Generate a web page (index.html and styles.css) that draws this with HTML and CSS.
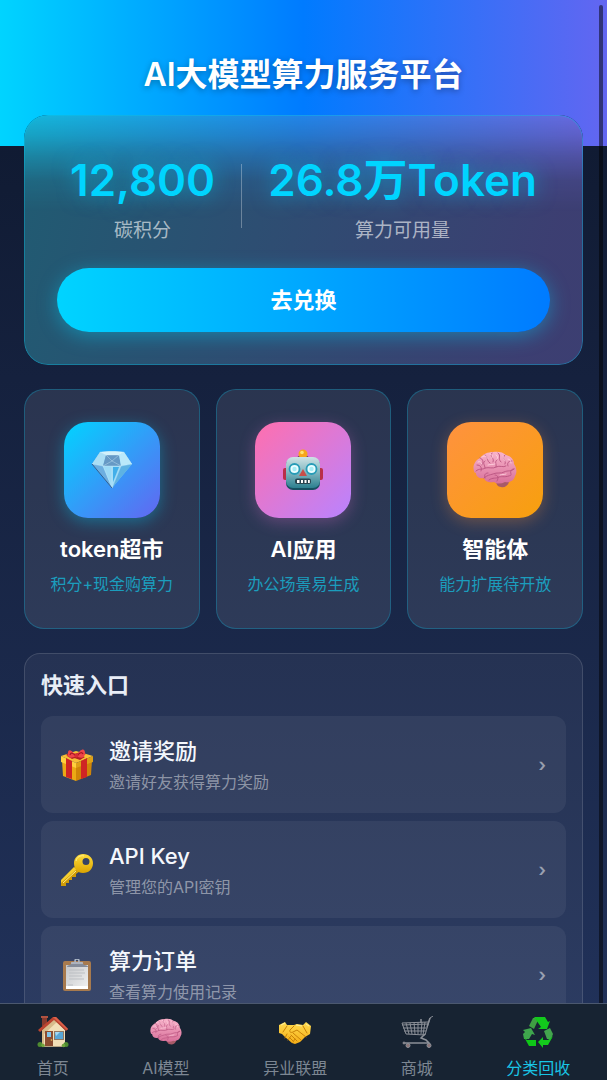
FILE: index.html
```html
<!DOCTYPE html>
<html lang="zh-CN">
<head>
<meta charset="utf-8">
<meta name="viewport" content="width=device-width, initial-scale=1">
<title>AI大模型算力服务平台</title>
<link rel="stylesheet" href="styles.css">
</head>
<body>
<svg class="defs" aria-hidden="true">
  <defs>
    <linearGradient id="brainFill" x1="0" y1="0" x2="0" y2="1"><stop offset="0" stop-color="#f9b4cb"/><stop offset="1" stop-color="#d8709a"/></linearGradient>
    <linearGradient id="robotFill" x1="0" y1="0" x2="0" y2="1"><stop offset="0" stop-color="#cfe3e5"/><stop offset=".5" stop-color="#7fb6c0"/><stop offset="1" stop-color="#2c7f8f"/></linearGradient>
    <linearGradient id="goldFill" x1="0" y1="0" x2="0" y2="1"><stop offset="0" stop-color="#ffdd3c"/><stop offset="1" stop-color="#dba400"/></linearGradient>
    <linearGradient id="handFill" x1="0" y1="0" x2="0" y2="1"><stop offset="0" stop-color="#ffdc50"/><stop offset="1" stop-color="#f5ad16"/></linearGradient>
    <linearGradient id="paperFill" x1="0" y1="0" x2="1" y2="1"><stop offset="0" stop-color="#c4c6c9"/><stop offset="1" stop-color="#f2f2f2"/></linearGradient>
    <symbol id="brain" viewBox="0 0 44 38">
      <path d="M23 30c0-3 4-4 8-4 4 0 6 2 5 5-1 4-5 6-8 5-3 0-5-3-5-6z" fill="#a85a68"/>
      <path d="M1 20C-1 14 3 9 7 7c3-4 8-6 13-6 5-1 10 0 13 3 5 1 8 5 8 9 3 4 3 9 1 12-1 5-6 7-10 6-4 2-8 2-11 0-4 1-9 0-10-4-4 1-8-1-8-5-1 0-2-1-2-2z" fill="url(#brainFill)"/>
      <path d="M3 20c3-3 7-1 9-3 4-1 8 1 11-1 4-2 7 1 10-1M11 27c3-3 6-3 9-4 4-2 8 0 11-2 4-2 7 0 10-3M16 29c4-3 7-1 10-3 3-1 7 1 12-2M7 7c3 1 4 4 2 7M12 4c4 2 1 6 5 8M19 2c-3 4 3 5 1 9M25 2c4 3-1 5 3 9M32 4c-4 3 2 5 0 9M39 10c-4 0-5 2-4 5M4 14c4 0 5 3 4 6M12 10c-3 2 0 4 0 7M24 9c-3 2 0 4-1 7M41 18c-3 0-4 2-3 5M22 24c3 0 4 3 2 6M15 22c-3 0-4 2-3 5" fill="none" stroke="#b95480" stroke-width=".9" stroke-linecap="round"/>
      <path d="M9 6c3-2 5-1 6 2M17 3c2 0 3 2 2 4M23 4c2 1 2 3 1 4M30 5c2 1 0 3 2 5M5 11c2-1 3 0 4 2M35 8c2 0 3 2 3 4M15 14c3-1 5 0 7-1M27 24c2-1 4 0 6-1" fill="none" stroke="#ffd5e1" stroke-width=".8" stroke-linecap="round"/>
    </symbol>
  </defs>
</svg>

<div class="app">
  <main class="scroll">
    <header class="hero"><h1 class="hero-title">AI大模型算力服务平台</h1></header>

    <section class="balance">
      <div class="stats">
        <div class="stat"><div class="stat-value">12,800</div><div class="stat-label">碳积分</div></div>
        <div class="stat-divider"></div>
        <div class="stat"><div class="stat-value">26.8万Token</div><div class="stat-label">算力可用量</div></div>
      </div>
      <button class="redeem" type="button">去兑换</button>
    </section>

    <section class="features">
      <a class="feature" href="#market">
        <span class="tile tile-blue">
          <svg width="42" height="38" viewBox="0 0 42 38" aria-hidden="true">
            <path d="M9 1C15 0 27 0 33 1l8 12-20 24L1 13z" fill="#79c5ec"/>
            <path d="M9 1 1 13l11 2 3-11z" fill="#abdef5"/><path d="M9 1l6 3h13l5-3C27 0 15 0 9 1z" fill="#d3f1fb"/>
            <path d="M15 4l-3 11h18L28 4z" fill="#6699c5"/><path d="M28 4l5-3 8 12-11 2z" fill="#b9e8fa"/>
            <path d="M1 13l11 2 9 22z" fill="#6caee0"/><path d="M12 15h18l-9 22z" fill="#9cdaf6"/><path d="M30 15l11-2-20 24z" fill="#5db2e3"/>
            <path d="M15 4l6 6 7-6M21 10l-9 5M21 10l9 5M21 15v22M1 13l11 2h18l11-2M12 15l9 22 9-22M9 1l6 3h13l5-3" fill="none" stroke="#d9f5ff" stroke-width=".6" opacity=".6"/>
            <path d="M22 16l6 0-6 15z" fill="#42afe9"/><path d="M1 13l20 24" stroke="#315f91" stroke-width="1"/>
          </svg>
        </span>
        <span class="feature-title">token超市</span><span class="feature-sub">积分+现金购算力</span>
      </a>
      <a class="feature" href="#apps">
        <span class="tile tile-pink">
          <svg width="42" height="42" viewBox="0 0 42 42" aria-hidden="true">
            <rect x="1" y="19" width="6" height="12" rx="2" fill="#b92f48"/><rect x="35" y="19" width="6" height="12" rx="2" fill="#b92f48"/>
            <path d="M15 10c0-6 12-6 12 0z" fill="#6e4668"/><circle cx="21" cy="5" r="4.5" fill="#f7a51c"/><circle cx="20" cy="3.500" r="1.800" fill="#ffe270"/>
            <rect x="4" y="9" width="34" height="32" rx="7" fill="#174f61"/><rect x="4" y="8" width="34" height="31" rx="7" fill="url(#robotFill)"/>
            <circle cx="12.500" cy="20" r="5" fill="#e9feff" stroke="#279cb7" stroke-width="1.800"/><circle cx="29.500" cy="20" r="5" fill="#e9feff" stroke="#279cb7" stroke-width="1.800"/>
            <circle cx="12.500" cy="20" r="2.200" fill="#a7edf5"/><circle cx="29.500" cy="20" r="2.200" fill="#a7edf5"/>
            <path d="M21 20l4 7h-8z" fill="#c94e49"/><rect x="13" y="29.500" width="16" height="5.500" rx="2" fill="#284550"/>
            <path d="M15 31h2.500v3H15zM19 31h2v3h-2zM22.500 31h2v3h-2zM26 31h1.800v3H26z" fill="#fff"/>
          </svg>
        </span>
        <span class="feature-title">AI应用</span><span class="feature-sub">办公场景易生成</span>
      </a>
      <a class="feature" href="#agents">
        <span class="tile tile-orange"><svg width="44" height="38" aria-hidden="true"><use href="#brain"/></svg></span>
        <span class="feature-title">智能体</span><span class="feature-sub">能力扩展待开放</span>
      </a>
    </section>

    <section class="panel">
      <h2 class="panel-title">快速入口</h2>
      <div class="entries">
        <a class="entry" href="#invite">
          <svg class="entry-icon" viewBox="0 0 32 32" aria-hidden="true">
            <path d="M1 11l14 5v16L2 27z" fill="#eca914"/><path d="M31 11l-16 5v16l15-6z" fill="#cf8508"/>
            <path d="M0 7L15 2l17 5-17 7z" fill="#f7be35"/><path d="M0 7l15 7v5L0 13z" fill="#ffd03d"/><path d="M32 7l-17 7v5l17-6z" fill="#dda017"/>
            <path d="M5 9l6 3v18l-6-2zM20 12l6-3v19l-6 2z" fill="#cf2524"/><path d="M6 7l14-4 5 2-14 5zM9 3l15 5-5 3L5 6z" fill="#b81e25"/>
            <path d="M15 7C10 0 7 0 7 4c-1 5 3 6 8 3zM15 7c5-8 9-8 9-3s-4 6-9 3z" fill="#ef4448"/><path d="M9 6c1-3 3-2 6 1M16 7c3-4 5-4 6-2" fill="none" stroke="#a31625" stroke-width="1.200"/><circle cx="15.500" cy="6.500" r="2" fill="#d72c35"/>
          </svg>
          <span class="entry-text"><span class="entry-title">邀请奖励</span><span class="entry-desc">邀请好友获得算力奖励</span></span><span class="chevron">›</span>
        </a>
        <a class="entry" href="#keys">
          <svg class="entry-icon" viewBox="0 0 32 32" aria-hidden="true">
            <path d="M14 14L0 28v4h5v-3h3v-3h3v-3h4v-3l4-3z" fill="#cf9b08"/><path d="M13 13L0 26v3l16-14z" fill="#f6cf2f"/>
            <path fill-rule="evenodd" d="M22 0c6 0 10 4 10 9 0 6-4 10-10 10s-9-4-9-10c0-5 4-9 9-9zm3 4a3.500 3.500 0 1 0 0 7 3.500 3.500 0 0 0 0-7z" fill="url(#goldFill)"/>
            <path d="M2 29l13-12M15 7c1-4 4-6 8-5" fill="none" stroke="#fff08b" stroke-width="1"/>
          </svg>
          <span class="entry-text"><span class="entry-title">API Key</span><span class="entry-desc">管理您的API密钥</span></span><span class="chevron">›</span>
        </a>
        <a class="entry" href="#orders">
          <svg class="entry-icon" viewBox="0 0 32 32" aria-hidden="true">
            <rect x="2" y="2" width="28" height="30" rx="2" fill="#a77a4e"/><path d="M5 6h22v24H5z" fill="url(#paperFill)"/>
            <path d="M5 27h22v3H5z" fill="#fff"/><path d="M8 11h15M8 14h16M8 17h13M8 20h15M7 26h5" stroke="#bcbfc3" stroke-width="1"/>
            <circle cx="16" cy="2" r="2" fill="none" stroke="#aeb8c6" stroke-width="1.500"/><path d="M11 3h10l2 3c3 0 4 1 4 2H6c0-1 1-2 3-2z" fill="#858c9a"/><path d="M10 4h12" stroke="#d4d9e2" stroke-width="1"/>
          </svg>
          <span class="entry-text"><span class="entry-title">算力订单</span><span class="entry-desc">查看算力使用记录</span></span><span class="chevron">›</span>
        </a>
      </div>
    </section>
  </main>

  <nav class="tabs">
    <a class="tab" href="#home">
      <svg class="tab-icon" viewBox="0 0 32 32" aria-hidden="true">
        <path d="M5 1h5v9H5z" fill="#8a3b2e"/><path d="M4 0h7v2H4z" fill="#b15341"/><path d="M5 14L17 3l11 11v17H5z" fill="#f2dfb8"/><path d="M5 14L17 3l3 3L7 18v13H5z" fill="#d7bb8c"/>
        <path d="M1 14L16 1h3l12 12-2 2L17 4 3 16z" fill="#bd4430"/><path d="M16 1h3l12 12-1 1L17 2z" fill="#dc614a"/>
        <path d="M8 15h8v15H8z" fill="#8b4d31"/><path d="M10 16h4v5h-4z" fill="#7fc4ea"/><path d="M17 15h10v9H17z" fill="#8e7764"/><path d="M18 16h8v7h-8z" fill="#58a6d6"/><path d="M18 16h5l-4 4z" fill="#a4d8f2"/>
        <circle cx="14.500" cy="24" r=".8" fill="#eec65c"/><path d="M5 30h23v1H5z" fill="#b4a384"/><circle cx="3" cy="28.500" r="2.500" fill="#4f8b31"/><circle cx="6" cy="29.500" r="1.800" fill="#71a63e"/><circle cx="29" cy="28.500" r="2.500" fill="#4f8b31"/><circle cx="26.500" cy="29.500" r="1.800" fill="#71a63e"/>
      </svg><span>首页</span>
    </a>
    <a class="tab" href="#models"><svg class="tab-icon" aria-hidden="true"><use href="#brain"/></svg><span>AI模型</span></a>
    <a class="tab" href="#partners">
      <svg class="tab-icon" viewBox="0 0 32 32" aria-hidden="true">
        <path d="M0 9l6-3 2 3 7 0 3-1 6 1 3-3 5 4-1 8-5 3-5 5-5 2-3-1-7-6-3-3-3-1z" fill="url(#handFill)"/>
        <path d="M15 10l-4 4c-1 2 1 3 3 2l4-2 9 7M14 17l8 7M12 19l6 6M10 21l4 4M4 16l4-6M28 17l-4-7M8 18l-2 4M12 20l-3 4M16 23l-2 3" fill="none" stroke="#c98208" stroke-width="1" stroke-linecap="round"/><path d="M2 9l4-2M17 9l6 1M27 8l3 2" stroke="#fff0a0" stroke-width="1"/>
      </svg><span>异业联盟</span>
    </a>
    <a class="tab" href="#shop">
      <svg class="tab-icon" viewBox="0 0 32 32" aria-hidden="true" fill="none" stroke="#8c9098" stroke-width="1">
        <path d="M32 0l-3 2-5 17-19-1L1 7l26-1M1 9l26-1M2 12h24M3 15h22M5 7l3 11M9 7l2 11M13 6l1 12M17 6v12M21 6l-1 12M24 6l-2 13" /><path d="M24 18l-4 4 5 2 3 3H4M20 3v4M29 2l-3 9" stroke-width="1.500"/><circle cx="7" cy="29.500" r="2" fill="#8d7476"/><circle cx="28" cy="29.500" r="2" fill="#8d7476"/><circle cx="3" cy="27" r="1" fill="#8d7476"/>
      </svg><span>商城</span>
    </a>
    <a class="tab tab-active" href="#recycle">
      <svg class="tab-icon" viewBox="0 0 32 32" aria-hidden="true">
        <path d="M7 10l4-8 6 0-5 11z" fill="#3f9f43"/><path d="M12 1h11l3 5 2-1-3 8h-9l3-2z" fill="#12c91c"/>
        <path d="M1 14l8-2 4 7-3-1-3 5-5 0-1-5 2-2z" fill="#3fa64d"/><path d="M2 21l3 3h9v6H7z" fill="#0fc618"/>
        <path d="M22 15l6-3 3 6-2 5h-4z" fill="#43a44e"/><path d="M31 20l-5 9h-5v3l-5-6 5-5v3h5z" fill="#14cc1c"/>
      </svg><span>分类回收</span>
    </a>
  </nav>
  <div class="scroll-thumb"></div>
</div>
</body>
</html>
```
FILE: styles.css
```css
* { box-sizing: border-box; }

body {
  margin: 0;
  font-family: Inter, "Noto Sans CJK SC", sans-serif;
  color: #fff;
}

a { color: inherit; text-decoration: none; }
h1, h2 { margin: 0; }
svg { display: block; }
.defs { position: absolute; width: 0; height: 0; }

.app {
  position: relative;
  display: flex;
  flex-direction: column;
  height: 100vh;
  background: linear-gradient(180deg, #0d172c 0%, #15213e 35%, #22335c 100%);
}

.scroll {
  flex: 1;
  min-height: 0;
  overflow-y: auto;
  scrollbar-width: none;
}

.scroll-thumb {
  position: absolute;
  top: 5px;
  right: 4px;
  bottom: 77px;
  width: 4px;
  border-radius: 2px 2px 0 0;
  background: rgba(0, 0, 0, 0.5);
}

.hero {
  padding: 50px 24px 46px;
  background: linear-gradient(90deg, #00d4ff 0%, #007bff 50%, #6366f1 100%);
  text-align: center;
}

.hero-title {
  font-size: 32px;
  line-height: 50px;
  font-weight: 600;
  text-shadow: 0 2px 6px rgba(0, 0, 0, 0.3);
}

.balance {
  position: relative;
  isolation: isolate;
  overflow: hidden;
  margin: -31px 24px 0;
  padding: 33px;
  border-radius: 24px;
  background: #14203b;
}

/* Header colours spilling into the frosted card */
.balance::before,
.balance::after {
  content: "";
  position: absolute;
  inset: 0;
  z-index: -1;
}

.balance::before {
  background: linear-gradient(90deg, #00bdee 0%, #007bff 50%, #5a63ea 100%);
  mask-image: linear-gradient(180deg, rgba(0, 0, 0, 0.9) 0, rgba(0, 0, 0, 0.7) 20px, rgba(0, 0, 0, 0.4) 42px, rgba(0, 0, 0, 0.13) 66px, transparent 96px);
}

.balance::after {
  border-radius: 24px;
  background: linear-gradient(105deg, rgba(54, 203, 217, 0.35), rgba(153, 133, 240, 0.3) 90%);
  box-shadow: inset 0 0 0 1px rgba(0, 200, 240, 0.35);
}

.stats {
  display: flex;
  align-items: center;
  justify-content: space-around;
  margin-bottom: 24px;
}

.stat { text-align: center; }

.stat-value {
  font-size: 44px;
  line-height: 64px;
  font-weight: 600;
  color: #00d4ff;
  text-shadow: 0 0 20px rgba(0, 212, 255, 0.5);
}

.stat-label {
  margin-top: 6px;
  font-size: 19px;
  line-height: 26px;
  color: rgba(255, 255, 255, 0.6);
}

.stat-divider {
  width: 1px;
  height: 64px;
  background: rgba(255, 255, 255, 0.3);
}

.redeem {
  display: block;
  width: 100%;
  height: 64px;
  padding: 0 0 4px;
  border: 0;
  border-radius: 32px;
  background: linear-gradient(90deg, #00d4ff, #007bff);
  box-shadow: 0 4px 20px rgba(0, 212, 255, 0.4);
  color: #fff;
  font: inherit;
  font-size: 22px;
  font-weight: 600;
}

.features {
  display: grid;
  grid-template-columns: repeat(3, 1fr);
  gap: 16px;
  margin: 24px 24px 0;
}

.feature {
  display: flex;
  flex-direction: column;
  align-items: center;
  padding: 32px 8px;
  border: 1px solid rgba(0, 212, 255, 0.25);
  border-radius: 20px;
  background: rgba(255, 255, 255, 0.09);
  white-space: nowrap;
}

.tile {
  display: grid;
  place-items: center;
  width: 96px;
  height: 96px;
  margin-bottom: 16px;
  border-radius: 24px;
}

.tile-blue {
  background: linear-gradient(135deg, #00d4ff, #6366f1);
  box-shadow: 0 4px 16px rgba(0, 212, 255, 0.35);
}

.tile-pink {
  background: linear-gradient(135deg, #ff6fae, #b983ff);
  box-shadow: 0 4px 16px rgba(232, 114, 209, 0.3);
}

.tile-orange {
  background: linear-gradient(135deg, #ff923f, #f7a00d);
  box-shadow: 0 4px 16px rgba(255, 146, 63, 0.3);
}

.feature-title {
  margin-bottom: 8px;
  font-size: 22px;
  line-height: 30px;
  font-weight: 600;
}

.feature-sub {
  font-size: 16px;
  line-height: 24px;
  color: #1b9dbd;
}

.panel {
  margin: 24px 24px 0;
  padding: 16px 16px 24px;
  border: 1px solid rgba(255, 255, 255, 0.13);
  border-radius: 16px;
  background: rgba(255, 255, 255, 0.05);
}

.panel-title {
  margin-bottom: 16px;
  font-size: 22px;
  line-height: 30px;
  font-weight: 600;
  color: #e8edf6;
}

.entries {
  display: flex;
  flex-direction: column;
  gap: 8px;
}

.entry {
  display: flex;
  align-items: center;
  gap: 16px;
  padding: 18px 20px;
  border-radius: 12px;
  background: rgba(255, 255, 255, 0.06);
}

.entry-icon { width: 32px; height: 32px; }

.entry-text {
  display: flex;
  flex: 1;
  flex-direction: column;
  gap: 2px;
}

.entry-title {
  font-size: 22px;
  line-height: 34px;
  font-weight: 500;
  color: #f4f7fc;
}

.entry-desc {
  font-size: 16px;
  line-height: 25px;
  color: rgba(255, 255, 255, 0.45);
}

.chevron {
  font-size: 18px;
  line-height: 30px;
  font-weight: 600;
  color: rgba(255, 255, 255, 0.5);
}

.tabs {
  display: flex;
  justify-content: space-around;
  padding-top: 12px;
  border-top: 1px solid #4b586f;
  background: #172332;
  color: #7d8793;
}

.tab {
  display: flex;
  flex-direction: column;
  align-items: center;
  gap: 8px;
  font-size: 16px;
  line-height: 24px;
}

.tab-icon { width: 32px; height: 32px; }
.tab-active { color: #19c5e5; }
```
